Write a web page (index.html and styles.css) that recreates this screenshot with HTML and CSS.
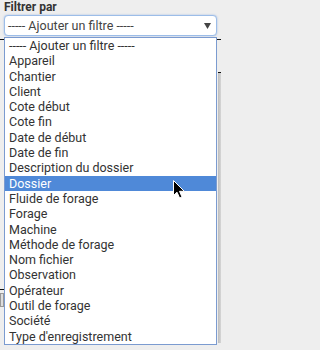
FILE: index.html
```html
<!DOCTYPE html>
<html lang="fr">
<head>
<meta charset="utf-8">
<title>Filtrer par</title>
<link rel="stylesheet" href="styles.css">
</head>
<body>
<div class="page">
  <div class="field">
    <div class="label">Filtrer par</div>
    <div class="select">
      <span>----- Ajouter un filtre -----</span>
      <svg class="arrow" width="7" height="6" viewBox="0 0 7 6"><path d="M0 0H7L3.5 6Z" fill="#444"/></svg>
    </div>
  </div>
  <div class="backdrop">
    <div class="edge-left"><div class="tick"></div><div class="box"></div></div>
    <div class="edge-right"></div>
  </div>
  <ul class="menu">
    <li>----- Ajouter un filtre -----</li>
    <li>Appareil</li>
    <li>Chantier</li>
    <li>Client</li>
    <li>Cote début</li>
    <li>Cote fin</li>
    <li>Date de début</li>
    <li>Date de fin</li>
    <li>Description du dossier</li>
    <li class="active">Dossier</li>
    <li>Fluide de forage</li>
    <li>Forage</li>
    <li>Machine</li>
    <li>Méthode de forage</li>
    <li>Nom fichier</li>
    <li>Observation</li>
    <li>Opérateur</li>
    <li>Outil de forage</li>
    <li>Société</li>
    <li>Type d'enregistrement</li>
  </ul>
  <svg class="cursor" width="13" height="19" viewBox="0 0 13 19"><path d="M0.5 0.5V15.5L4 12.2L6.6 18L9 17L6.5 11.3H11.3Z" fill="#000" stroke="#fff" stroke-width="1"/></svg>
</div>
</body>
</html>
```
FILE: styles.css
```css
body {
  margin: 0;
  background: #eeeeee;
  font-family: Roboto, "Liberation Sans", sans-serif;
  color: #333;
}
.page {
  position: relative;
  width: 221px;
  height: 350px;
  overflow: hidden;
}
.field {
  padding: 0 4px;
}
.label {
  font-weight: 700;
  font-size: 12px;
  line-height: 15px;
  height: 15px;
  color: #333;
}
.select {
  box-sizing: border-box;
  height: 21px;
  border: 1px solid #9cbde8;
  border-radius: 4px;
  background: #fff;
  box-shadow: 0 0 2px rgba(90, 140, 220, 0.55);
  display: flex;
  align-items: center;
  justify-content: space-between;
  padding: 0 5px 0 3px;
  font-size: 12.5px;
  color: #444;
}
.arrow {
  display: block;
}
.backdrop {
  display: flex;
  justify-content: space-between;
  margin-top: 3px;
  border-top: 1px solid #111;
  height: 310px;
}
.edge-left {
  width: 4px;
  padding-top: 249px;
}
.tick {
  height: 1px;
  background: #111;
  width: 4px;
}
.box {
  margin-top: 3px;
  height: 12px;
  width: 2px;
  border: 1px solid #999;
  background: #ddd;
}
.edge-right {
  width: 3px;
  margin-top: 32px;
  border-top: 1px solid #111;
  background: linear-gradient(to right, #bdbdbd, #d6d6d6);
  height: 270px;
}
.menu {
  position: absolute;
  top: 37px;
  left: 4px;
  width: 213px;
  box-sizing: border-box;
  margin: 0;
  padding: 0;
  list-style: none;
  background: #fff;
  border: 1px solid #7b9bd0;
  font-size: 12.5px;
  line-height: 15.3px;
  color: #333;
}
.menu li {
  padding-left: 4px;
  white-space: nowrap;
}
.menu li.active {
  background: #4f89d8;
  color: #fff;
}
.cursor {
  position: absolute;
  left: 173px;
  top: 180px;
}
```
